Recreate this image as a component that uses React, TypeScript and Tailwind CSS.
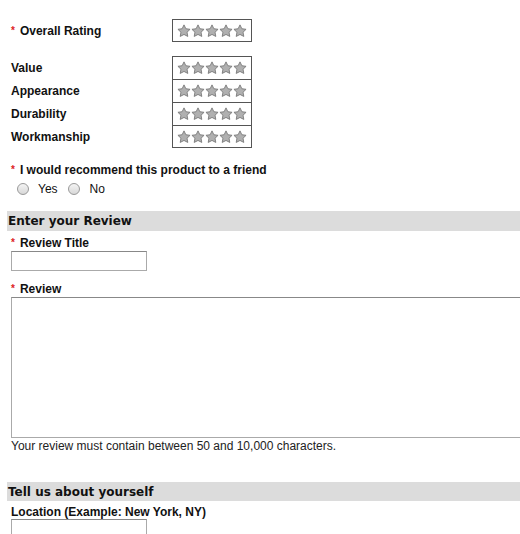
const Star = () => (
  <svg width="14" height="14" viewBox="0 0 24 24">
    <path
      d="M12 1.5l3.2 6.6 7.2 1-5.2 5 1.3 7.2L12 17.9l-6.5 3.4 1.3-7.2-5.2-5 7.2-1z"
      fill="#b0b0b0"
      stroke="#777"
      strokeWidth="1.5"
      strokeLinejoin="round"
    />
  </svg>
);

const Stars = ({ className }: { className: string }) => (
  <div className={"w-[80px] flex items-center justify-center border-[#555] bg-white " + className}>
    {[0, 1, 2, 3, 4].map((i) => (
      <Star key={i} />
    ))}
  </div>
);

const Req = () => <span className="text-[#d22] text-[10px] leading-none mr-[5px] relative -top-[1px]">*</span>;

const App = () => {
  const subs = ["Value", "Appearance", "Durability", "Workmanship"];
  return (
    <div
      className="w-[520px] h-[534px] overflow-hidden bg-white text-[#111] text-[12px]"
      style={{ fontFamily: "Arial, 'Liberation Sans', Helvetica, sans-serif" }}
    >
      <div className="pl-[11px] pt-[19px]">
        <div className="flex items-center h-[23px]">
          <div className="w-[161px] font-bold">
            <Req />
            Overall Rating
          </div>
          <Stars className="h-[23px] border" />
        </div>

        <div className="mt-[14px]">
          {subs.map((s, i) => (
            <div key={s} className="flex items-center h-[23px]">
              <div className="w-[161px] font-bold">{s}</div>
              <Stars className={"h-[23px] border-x border-t " + (i === 3 ? "border-b" : "")} />
            </div>
          ))}
        </div>

        <div className="mt-[15px] font-bold leading-[14px]">
          <Req />I would recommend this product to a friend
        </div>
        <div className="flex items-center mt-[4px] pl-[6px] h-[16px]">
          <span className="w-[12px] h-[12px] rounded-full border border-[#999] bg-gradient-to-b from-[#f4f4f4] to-[#d8d8d8]" />
          <span className="ml-[9px]">Yes</span>
          <span className="ml-[10px] w-[12px] h-[12px] rounded-full border border-[#999] bg-gradient-to-b from-[#f4f4f4] to-[#d8d8d8]" />
          <span className="ml-[10px]">No</span>
        </div>
      </div>

      <div
        className="ml-[7px] mt-[14px] h-[20px] bg-[#dcdcdc] flex items-center pl-[1px] font-bold text-[12px] text-[#111]"
        style={{ fontFamily: "Verdana, 'DejaVu Sans', sans-serif" }}
      >
        Enter your Review
      </div>

      <div className="pl-[11px]">
        <div className="font-bold mt-[5px] leading-[14px]">
          <Req />
          Review Title
        </div>
        <div className="mt-[1px] w-[136px] h-[20px] border border-[#aaa] border-t-[#888]" />

        <div className="font-bold mt-[11px] leading-[14px]">
          <Req />
          Review
        </div>
        <div className="mt-[1px] w-[520px] h-[141px] border border-[#aaa] border-t-[#888]" />
        <div className="mt-[1px] leading-[14px] text-[#222]">
          Your review must contain between 50 and 10,000 characters.
        </div>
      </div>

      <div
        className="ml-[7px] mt-[29px] h-[19px] bg-[#dcdcdc] flex items-center pl-[1px] font-bold text-[12px] text-[#111]"
        style={{ fontFamily: "Verdana, 'DejaVu Sans', sans-serif" }}
      >
        Tell us about yourself
      </div>

      <div className="pl-[11px]">
        <div className="font-bold mt-[4px] leading-[14px]">Location (Example: New York, NY)</div>
        <div className="mt-[0px] w-[136px] h-[20px] border border-[#aaa] border-t-[#888]" />
      </div>
    </div>
  );
};

export default App;
